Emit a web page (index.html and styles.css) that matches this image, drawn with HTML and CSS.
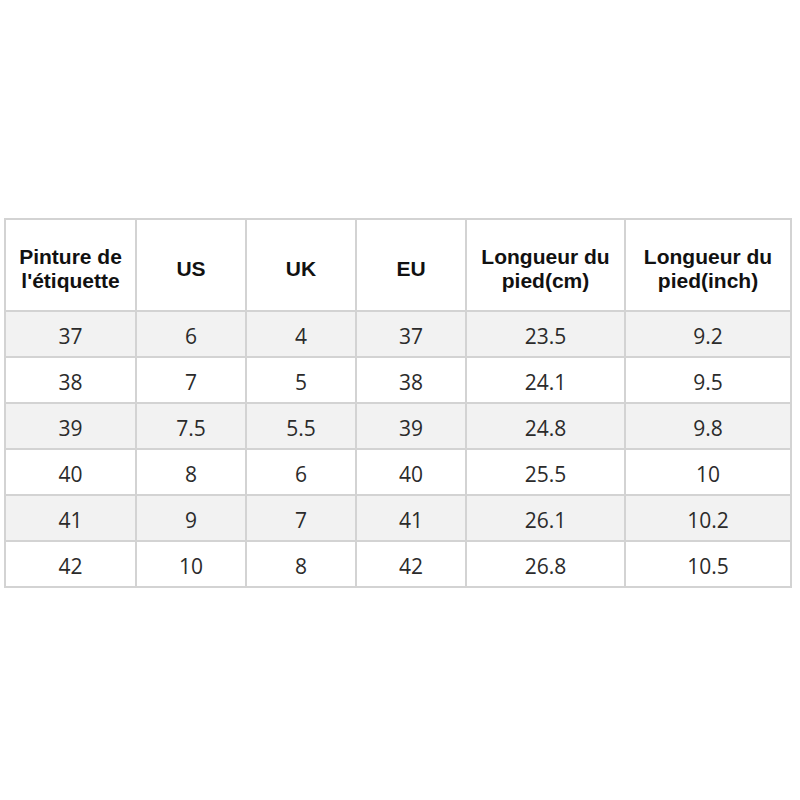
FILE: index.html
```html
<!DOCTYPE html>
<html>
<head>
<meta charset="utf-8">
<link rel="stylesheet" href="styles.css">
</head>
<body>
<div class="page">
  <div class="chart">
    <div class="cell head">Pinture de<br>l'étiquette</div>
    <div class="cell head">US</div>
    <div class="cell head">UK</div>
    <div class="cell head">EU</div>
    <div class="cell head">Longueur du<br>pied(cm)</div>
    <div class="cell head">Longueur du<br>pied(inch)</div>

    <div class="cell odd">37</div><div class="cell odd">6</div><div class="cell odd">4</div><div class="cell odd">37</div><div class="cell odd">23.5</div><div class="cell odd">9.2</div>
    <div class="cell">38</div><div class="cell">7</div><div class="cell">5</div><div class="cell">38</div><div class="cell">24.1</div><div class="cell">9.5</div>
    <div class="cell odd">39</div><div class="cell odd">7.5</div><div class="cell odd">5.5</div><div class="cell odd">39</div><div class="cell odd">24.8</div><div class="cell odd">9.8</div>
    <div class="cell">40</div><div class="cell">8</div><div class="cell">6</div><div class="cell">40</div><div class="cell">25.5</div><div class="cell">10</div>
    <div class="cell odd">41</div><div class="cell odd">9</div><div class="cell odd">7</div><div class="cell odd">41</div><div class="cell odd">26.1</div><div class="cell odd">10.2</div>
    <div class="cell">42</div><div class="cell">10</div><div class="cell">8</div><div class="cell">42</div><div class="cell">26.8</div><div class="cell">10.5</div>
  </div>
</div>
</body>
</html>
```
FILE: styles.css
```css
html, body {
  margin: 0;
  padding: 0;
  background: #ffffff;
}
.page {
  padding: 218px 0 0 4px;
}
.chart {
  display: grid;
  grid-template-columns: 129px 108px 108px 108px 157px 164px;
  grid-template-rows: 90px repeat(6, 44px);
  gap: 2px;
  padding: 2px;
  width: 784px;
  background: #d3d3d3;
}
.cell {
  background: #ffffff;
  display: flex;
  align-items: center;
  justify-content: center;
  text-align: center;
  padding-top: 4px;
  font-family: "Open Sans", "Noto Sans", sans-serif;
  font-size: 21px;
  color: #2b2b2b;
}
.cell.odd {
  background: #f2f2f2;
}
.cell.head {
  padding-top: 8px;
  font-family: "Liberation Sans", Arial, sans-serif;
  font-weight: bold;
  font-size: 21px;
  line-height: 24px;
  color: #111111;
}
```
